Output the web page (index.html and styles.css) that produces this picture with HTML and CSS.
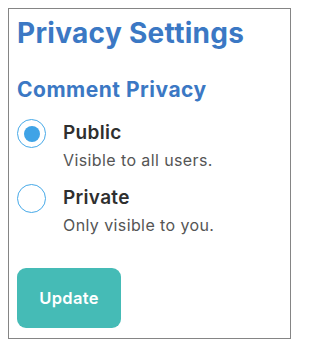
FILE: index.html
```html
<!DOCTYPE html>
<html lang="en">
<head>
<meta charset="utf-8">
<title>Privacy Settings</title>
<link rel="stylesheet" href="styles.css">
</head>
<body>
<div class="panel">
  <h1 class="title">Privacy Settings</h1>
  <h2 class="subtitle">Comment Privacy</h2>
  <div class="options">
    <label class="option">
      <span class="radio checked"></span>
      <span class="text">
        <span class="label">Public</span>
        <span class="desc">Visible to all users.</span>
      </span>
    </label>
    <label class="option">
      <span class="radio"></span>
      <span class="text">
        <span class="label">Private</span>
        <span class="desc">Only visible to you.</span>
      </span>
    </label>
  </div>
  <button class="btn" type="button">Update</button>
</div>
</body>
</html>
```

FILE: styles.css
```css
html, body {
  margin: 0;
  padding: 0;
  background: #ffffff;
}
body {
  padding: 8px;
  font-family: Inter, "Noto Sans", "Liberation Sans", sans-serif;
}
.panel {
  box-sizing: border-box;
  width: 283px;
  height: 331px;
  border: 1px solid #858585;
  padding: 7px 8px 9px 8px;
  display: flex;
  flex-direction: column;
  align-items: flex-start;
}
.title {
  margin: 0;
  font-size: 28px;
  line-height: 34px;
  font-weight: 700;
  color: #3b78c4;
  letter-spacing: 0.3px;
}
.subtitle {
  margin: 28px 0 0 0;
  font-size: 21px;
  line-height: 24px;
  font-weight: 700;
  color: #3b78c4;
  letter-spacing: 0.5px;
}
.options {
  margin-top: 17px;
  display: flex;
  flex-direction: column;
  gap: 14px;
}
.option {
  display: flex;
  align-items: flex-start;
  gap: 17px;
}
.radio {
  box-sizing: border-box;
  width: 29px;
  height: 29px;
  border-radius: 50%;
  border: 1.5px solid #46a9e8;
  flex: none;
  display: flex;
  align-items: center;
  justify-content: center;
  background: #fff;
}
.radio.checked::after {
  content: "";
  width: 16px;
  height: 16px;
  border-radius: 50%;
  background: #3fa3e6;
}
.text {
  padding-top: 3px;
  display: flex;
  flex-direction: column;
}
.label {
  font-size: 19px;
  line-height: 22px;
  font-weight: 600;
  color: #2f2f2f;
  letter-spacing: 0.3px;
}
.desc {
  margin-top: 7px;
  font-size: 16px;
  line-height: 19px;
  font-weight: 400;
  color: #555555;
  letter-spacing: 0.4px;
}
.btn {
  margin-top: 33px;
  width: 104px;
  height: 60px;
  border: none;
  border-radius: 9px;
  background: #45bbb6;
  color: #ffffff;
  font-family: Inter, "Noto Sans", "Liberation Sans", sans-serif;
  font-size: 16.5px;
  font-weight: 600;
  letter-spacing: 0.3px;
  padding: 0;
}
```
